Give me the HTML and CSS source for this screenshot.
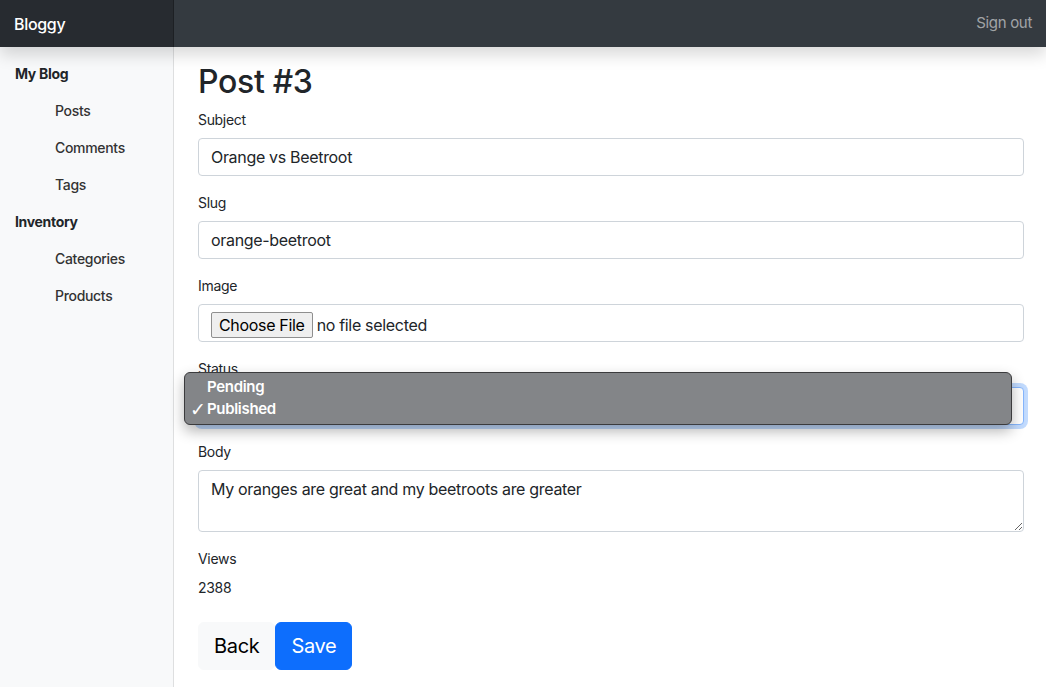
FILE: index.html
```html
<!DOCTYPE html>
<html lang="en">
<head>
<meta charset="utf-8">
<title>Bloggy</title>
<link rel="stylesheet" href="styles.css">
</head>
<body>
<header class="navbar">
  <a class="brand" href="#">Bloggy</a>
  <div class="navbar-spacer"></div>
  <a class="signout" href="#">Sign out</a>
</header>
<div class="layout">
  <aside class="sidebar">
    <div class="side-heading">My Blog</div>
    <ul class="side-list">
      <li><a href="#">Posts</a></li>
      <li><a href="#">Comments</a></li>
      <li><a href="#">Tags</a></li>
    </ul>
    <div class="side-heading">Inventory</div>
    <ul class="side-list">
      <li><a href="#">Categories</a></li>
      <li><a href="#">Products</a></li>
    </ul>
  </aside>
  <main class="main">
    <h1 class="title">Post #3</h1>
    <div class="group">
      <label class="label">Subject</label>
      <input class="control" type="text" value="Orange vs Beetroot">
    </div>
    <div class="group">
      <label class="label">Slug</label>
      <input class="control" type="text" value="orange-beetroot">
    </div>
    <div class="group">
      <label class="label">Image</label>
      <div class="control file-control">
        <span class="file-btn">Choose File</span>
        <span class="file-name">no file selected</span>
      </div>
    </div>
    <div class="group status-group">
      <label class="label">Status</label>
      <div class="control select-control focused">Published</div>
      <div class="popup">
        <div class="popup-item"><span class="check"></span>Pending</div>
        <div class="popup-item"><span class="check">✓</span>Published</div>
      </div>
    </div>
    <div class="group">
      <label class="label">Body</label>
      <textarea class="control textarea" rows="2">My oranges are great and my beetroots are greater</textarea>
    </div>
    <div class="group">
      <div class="label">Views</div>
      <div class="value">2388</div>
    </div>
    <div class="actions">
      <a class="btn btn-light" href="#">Back</a>
      <button class="btn btn-primary" type="button">Save</button>
    </div>
  </main>
</div>
</body>
</html>
```
FILE: styles.css
```css
* { box-sizing: border-box; }
html, body { height: 100%; }
body {
  margin: 0;
  font-family: "Inter", "Liberation Sans", sans-serif;
  letter-spacing: -0.02em;
  color: #212529;
  background: #fff;
  font-size: 16px;
  line-height: 1.5;
  overflow: hidden;
}
a { text-decoration: none; }

.navbar {
  position: relative;
  z-index: 3;
  display: flex;
  align-items: center;
  height: 47px;
  background: #343a40;
  box-shadow: 0 8px 16px rgba(0,0,0,.15);
}
.brand {
  width: 174px;
  height: 100%;
  display: flex;
  align-items: center;
  padding-left: 14px;
  font-size: 16px;
  font-weight: 500;
  color: #fff;
  background: rgba(0,0,0,.25);
  box-shadow: inset -1px 0 0 rgba(0,0,0,.25);
}
.navbar-spacer { flex: 1; }
.signout {
  font-size: 15px;
  color: rgba(255,255,255,.55);
  padding-right: 14px;
}

.layout {
  display: flex;
  height: calc(100% - 47px);
}
.sidebar {
  width: 174px;
  flex: none;
  background: #f8f9fa;
  box-shadow: inset -1px 0 0 rgba(0,0,0,.1);
  padding-top: 8px;
}
.side-heading {
  font-size: 14px;
  font-weight: 700;
  line-height: 21px;
  padding: 8px 15px;
  color: #212529;
}
.side-list {
  list-style: none;
  margin: 0;
  padding: 0 0 0 40px;
}
.side-list a {
  display: block;
  font-size: 14px;
  font-weight: 500;
  line-height: 21px;
  padding: 8px 15px;
  color: #333;
}

.main {
  flex: 1;
  padding: 16px 22px 0 24px;
}
.title {
  margin: 0 0 8px;
  font-size: 32px;
  font-weight: 500;
  line-height: 1.2;
}
.group {
  margin-bottom: 16px;
}
.label {
  display: block;
  font-size: 14px;
  line-height: 21px;
  margin-bottom: 8px;
}
.control {
  display: block;
  width: 100%;
  height: 38px;
  padding: 6px 12px;
  font-family: inherit;
  letter-spacing: inherit;
  font-size: 16px;
  line-height: 24px;
  color: #212529;
  background: #fff;
  border: 1px solid #ced4da;
  border-radius: 4px;
  outline: none;
}
.file-control {
  display: flex;
  align-items: center;
  padding: 3px 12px 0;
}
.file-btn {
  height: 26px;
  line-height: 24px;
  padding: 0 7px;
  font-size: 16px;
  color: #000;
  background: #efefef;
  border: 1px solid #8f8f8f;
  border-radius: 2px;
  margin-right: 4px;
}
.file-name {
  color: #212529;
}

.status-group { position: relative; }
.focused {
  border-color: #86b7fe;
  box-shadow: 0 0 0 4px rgba(13,110,253,.25);
}
.popup {
  position: absolute;
  left: -14px;
  right: 12px;
  top: 14px;
  height: 53px;
  padding-top: 3px;
  background: #838588;
  border: 1px solid #3b3b3d;
  border-radius: 6px;
  box-shadow: 0 6px 14px rgba(0,0,0,.3);
  color: #fff;
  font-size: 15px;
  font-weight: 600;
}
.popup-item {
  display: flex;
  align-items: center;
  height: 22px;
  padding-left: 5px;
}
.check {
  width: 17px;
  font-family: "DejaVu Sans", sans-serif;
  font-size: 19px;
  font-weight: 400;
  line-height: 22px;
}

.textarea {
  height: 62px;
  resize: vertical;
}
.value {
  font-size: 14px;
  line-height: 21px;
}
.actions {
  display: flex;
  margin-top: 24px;
}
.btn {
  display: inline-block;
  height: 48px;
  padding: 8px 15px;
  font-family: inherit;
  letter-spacing: inherit;
  font-size: 20px;
  line-height: 30px;
  border: 1px solid transparent;
  border-radius: 6px;
  cursor: pointer;
}
.btn-light {
  background: #f8f9fa;
  border-color: #f8f9fa;
  color: #000;
}
.btn-primary {
  background: #0d6efd;
  border-color: #0d6efd;
  color: #fff;
}
```
